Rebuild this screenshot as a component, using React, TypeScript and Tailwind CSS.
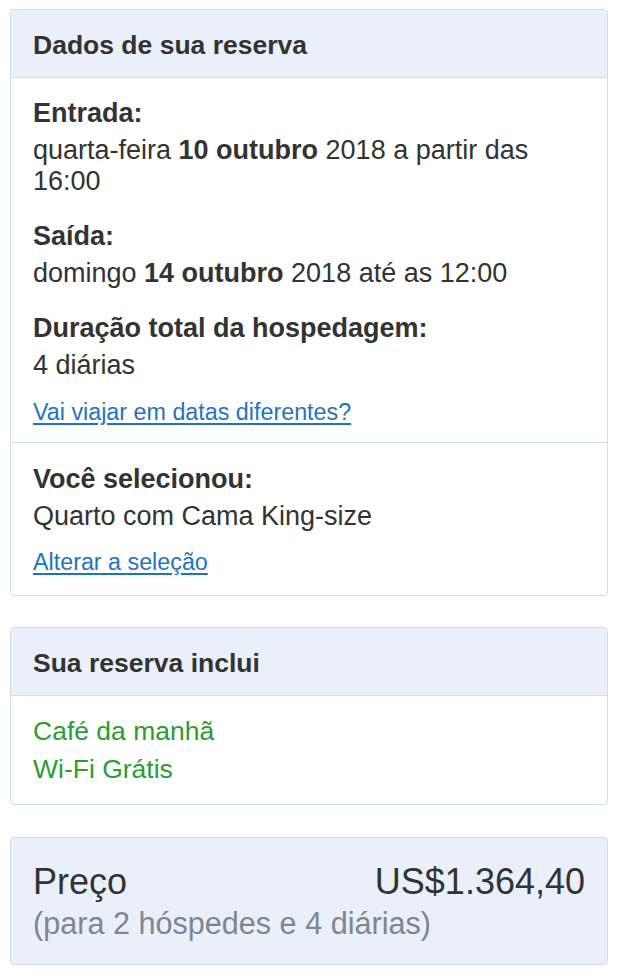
import React from "react";

const font = { fontFamily: '"Liberation Sans", Arial, sans-serif' };

function Header({ children }: { children: React.ReactNode }) {
  return (
    <div className="h-[68px] flex items-center px-[22px] bg-[#e9f0fa] border-b border-[#d0dcea] rounded-t-[4px]">
      <h2 className="text-[26.5px] font-bold text-[#333333] leading-[30px] pt-[2px]">{children}</h2>
    </div>
  );
}

function Field({ label, children }: { label: string; children: React.ReactNode }) {
  return (
    <div>
      <div className="font-bold text-[27px] leading-[31px] mb-[6px]">{label}</div>
      <div className="text-[27px] leading-[31px]">{children}</div>
    </div>
  );
}

export default function App() {
  return (
    <div className="w-[620px] bg-white pl-[10px] pr-[12px] pt-[9px] pb-[15px] text-[#333333]" style={font}>
      <div className="border border-[#d0dcea] rounded-[4px]">
        <Header>Dados de sua reserva</Header>
        <div className="px-[22px] pt-[20px] pb-[17px] border-b border-[#d0dcea] flex flex-col gap-[24px]">
          <Field label="Entrada:">
            quarta-feira <b>10 outubro</b> 2018 a partir das
            <br />
            16:00
          </Field>
          <Field label="Saída:">
            domingo <b>14 outubro</b> 2018 até as 12:00
          </Field>
          <div>
            <Field label="Duração total da hospedagem:">4 diárias</Field>
            <a href="#" className="block mt-[18px] text-[23.3px] leading-[26px] text-[#1f74bf] underline underline-offset-[3px]">
              Vai viajar em datas diferentes?
            </a>
          </div>
        </div>
        <div className="px-[22px] pt-[21px] pb-[20px]">
          <Field label="Você selecionou:">Quarto com Cama King-size</Field>
          <a href="#" className="block mt-[17px] text-[23.3px] leading-[26px] text-[#1f74bf] underline underline-offset-[3px]">
            Alterar a seleção
          </a>
        </div>
      </div>

      <div className="mt-[31px] border border-[#d0dcea] rounded-[4px]">
        <Header>Sua reserva inclui</Header>
        <div className="px-[22px] pt-[16px] pb-[16px] text-[26.5px] leading-[38px] text-[#2a9d2f]">
          <div>Café da manhã</div>
          <div>Wi-Fi Grátis</div>
        </div>
      </div>

      <div className="mt-[32px] border border-[#d0dcea] rounded-[4px] bg-[#e9f0fa] px-[22px] pt-[23px] pb-[23px]">
        <div className="flex justify-between items-center text-[36px] leading-[42px] text-[#333333]">
          <span>Preço</span>
          <span>US$1.364,40</span>
        </div>
        <div className="mt-[2px] text-[30.6px] leading-[36px] text-[#80868f]">(para 2 hóspedes e 4 diárias)</div>
      </div>
    </div>
  );
}
